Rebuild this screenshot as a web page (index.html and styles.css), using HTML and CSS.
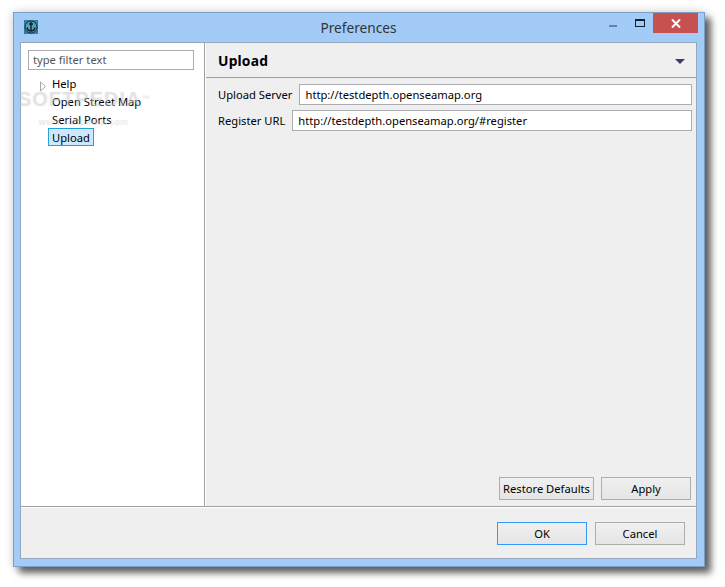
FILE: index.html
```html
<!DOCTYPE html>
<html lang="en">
<head>
<meta charset="utf-8">
<title>Preferences</title>
<link rel="stylesheet" href="styles.css">
</head>
<body>
<div class="window">
  <div class="titlebar">
    <svg class="app-icon" width="14" height="14" viewBox="0 0 14 14">
      <rect width="14" height="14" fill="#2f7f9c"/>
      <circle cx="7" cy="7" r="6" fill="#5a9fb8" stroke="#12303f" stroke-width="1"/>
      <path d="M7 2v9M5 4h4M3 7.5c.5 2.5 2 3.5 4 3.5s3.5-1 4-3.5" fill="none" stroke="#0b2230" stroke-width="1.4"/>
    </svg>
    <div class="title">Preferences</div>
    <div class="controls">
      <span class="min"></span>
      <span class="max"></span>
      <span class="close">
        <svg width="10" height="9" viewBox="0 0 10 9"><path d="M1 .5l8 8M9 .5l-8 8" stroke="#fff" stroke-width="2" fill="none"/></svg>
      </span>
    </div>
  </div>
  <div class="client">
    <div class="main">
      <aside class="sidebar">
        <input class="filter" type="text" placeholder="type filter text">
        <ul class="tree">
          <li class="node">
            <svg class="twisty" width="8" height="11" viewBox="0 0 8 11"><path d="M1.5 1l5 4.5-5 4.5z" fill="#fff" stroke="#a6a6a6"/></svg>
            <span class="node-label">Help</span>
          </li>
          <li class="node"><span class="node-label">Open Street Map</span></li>
          <li class="node"><span class="node-label">Serial Ports</span></li>
          <li class="node"><span class="node-label selected">Upload</span></li>
        </ul>
      </aside>
      <section class="pane">
        <header class="pane-head">
          <h1 class="pane-title">Upload</h1>
          <svg class="menu-arrow" width="10" height="5" viewBox="0 0 10 5"><path d="M0 0h10L5 5z" fill="#3f3a6e"/></svg>
        </header>
        <div class="pane-body">
          <div class="fields">
            <div class="field">
              <label class="field-label">Upload Server</label>
              <input class="field-input" type="text" value="http://testdepth.openseamap.org">
            </div>
            <div class="field">
              <label class="field-label">Register URL</label>
              <input class="field-input" type="text" value="http://testdepth.openseamap.org/#register">
            </div>
          </div>
          <div class="pane-actions">
            <button class="btn btn-restore">Restore Defaults</button>
            <button class="btn btn-apply">Apply</button>
          </div>
        </div>
      </section>
    </div>
    <footer class="footer">
      <button class="btn btn-wide btn-default">OK</button>
      <button class="btn btn-wide">Cancel</button>
    </footer>
  </div>
  <div class="watermark">SOFTPEDIA<small class="watermark-tm">™</small><span class="watermark-url">www.softpedia.com</span></div>
</div>
</body>
</html>
```

FILE: styles.css
```css
* { box-sizing: border-box; }
html, body { margin: 0; height: 100%; }
body {
  background: #fff;
  padding: 12px 0 0 13px;
  font: 11.2px "Noto Sans", "Open Sans", sans-serif;
  color: #000;
  overflow: hidden;
}
.window {
  position: relative;
  width: 692px;
  height: 555px;
  background: #a3cbf7;
  border: 1px solid #7d9fc6;
  box-shadow: 6px 6px 7px rgba(0,0,0,.6), 0 0 9px rgba(0,0,0,.2);
  display: flex;
  flex-direction: column;
  padding: 0 7px 7px 6px;
}
.titlebar {
  height: 29px;
  display: flex;
  align-items: flex-start;
  position: relative;
  flex: none;
}
.app-icon { margin: 7px 0 0 4px; }
.title {
  position: absolute;
  left: 0;
  right: 0;
  top: 5px;
  text-align: center;
  font-size: 13.7px;
  line-height: 20px;
  color: #333;
}
.controls {
  position: absolute;
  right: -1px;
  top: 0;
  display: flex;
}
.min { width: 8px; height: 2px; background: #5f83aa; margin: 12px 18px 0 0; }
.max { width: 10px; height: 8px; border: 1px solid #10202f; border-top-width: 2px; margin: 6px 8px 0 0; }
.close {
  width: 45px;
  height: 20px;
  background: #c75050;
  display: flex;
  align-items: center;
  justify-content: center;
}
.client {
  flex: 1;
  min-height: 0;
  display: flex;
  flex-direction: column;
  background: #efefef;
  border: 1px solid #93a7bd;
}
.main { flex: 1; min-height: 0; display: flex; }
.sidebar {
  width: 184px;
  flex: none;
  background: #fff;
  border-right: 1px solid #a0a0a0;
  padding: 7px 10px 0 7px;
}
.filter {
  display: block;
  width: 166px;
  height: 20px;
  border: 1px solid #abadb3;
  padding: 0 4px 2px;
  font: inherit;
  background: #fff;
  outline: none;
}
.filter::placeholder { color: #555; opacity: 1; }
.tree { list-style: none; margin: 4px 0 0; padding: 0 0 0 24px; }
.node { position: relative; height: 18px; display: flex; align-items: center; }
.twisty { position: absolute; left: -13px; top: 7px; }
.node-label { padding: 1px 3px 0; line-height: 15px; border: 1px solid transparent; white-space: nowrap; margin-left: -4px; }
.selected { background: #cce8ff; border-color: #26a0da; }
.pane {
  flex: 1;
  min-width: 0;
  display: flex;
  flex-direction: column;
  border-left: 1px solid #fff;
}
.pane-head {
  height: 35px;
  flex: none;
  border-bottom: 1px solid #a0a0a0;
  display: flex;
  align-items: center;
  justify-content: space-between;
  padding: 2px 11px 0 12px;
}
.pane-title { margin: 0; font-size: 13.8px; font-weight: 700; line-height: 18px; letter-spacing: .2px; }
.pane-body {
  flex: 1;
  min-height: 0;
  display: flex;
  flex-direction: column;
  justify-content: space-between;
  padding: 6px 4px 6px 12px;
}
.fields { display: flex; flex-direction: column; gap: 5px; }
.field { display: flex; align-items: center; height: 21px; gap: 7px; }
.field-label { white-space: nowrap; }
.field-input {
  flex: 1;
  min-width: 0;
  height: 21px;
  border: 1px solid #abadb3;
  padding: 0 5px;
  font: inherit;
  background: #fff;
  outline: none;
}
.pane-actions { display: flex; justify-content: flex-end; gap: 7px; padding-right: 1px; }
.btn {
  height: 23px;
  border: 1px solid #adadad;
  background: linear-gradient(#f0f0f0, #e5e5e5);
  font: inherit;
  color: #000;
  padding: 0;
  white-space: nowrap;
}
.btn-restore { width: 95px; }
.btn-apply { width: 90px; }
.btn-wide { width: 90px; }
.btn-default { border-color: #3399ff; }
.footer {
  height: 52px;
  flex: none;
  border-top: 1px solid #a0a0a0;
  box-shadow: inset 0 1px 0 #fff;
  display: flex;
  justify-content: flex-end;
  align-items: flex-start;
  gap: 8px;
  padding: 15px 11px 0 0;
}
.watermark {
  position: absolute;
  left: 4px;
  top: 76px;
  font: 700 20px/20px "Liberation Sans", sans-serif;
  letter-spacing: 1px;
  color: rgba(255,255,255,.3);
  text-shadow: 0 0 1px rgba(120,120,120,.3);
  pointer-events: none;
  white-space: nowrap;
}
.watermark-tm { font-size: 8px; vertical-align: top; font-weight: 400; }
.watermark-url {
  display: block;
  margin: 8px 0 0 21px;
  font: 400 9px/10px "Liberation Sans", sans-serif;
  letter-spacing: .7px;
}
```
